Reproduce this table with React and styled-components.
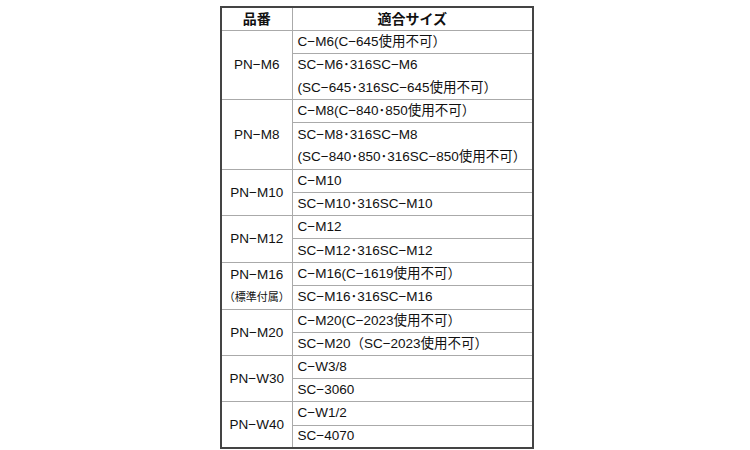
import React from 'react';
import styled, { createGlobalStyle } from 'styled-components';

const GlobalStyle = createGlobalStyle`
  html, body {
    margin: 0;
    padding: 0;
    background: #fff;
  }
  body {
    font-family: "Liberation Sans", "Noto Sans CJK JP", sans-serif;
    color: #111;
  }
`;

const Page = styled.div`
  width: 750px;
  height: 450px;
  padding: 6px 0 0 220px;
  box-sizing: border-box;
  overflow: hidden;
`;

const Table = styled.table`
  width: 314px;
  border-collapse: collapse;
  border: 2px solid #444;
  table-layout: fixed;
  font-size: 13.5px;
`;

const Row = styled.tr`
  height: ${(p) => (p.$double ? 46.4 : 23.2)}px;
`;

const HeadCell = styled.th`
  padding: 0;
  border: 1px solid #aaa;
  font-weight: bold;
  font-size: 14px;
  line-height: 18px;
  text-align: center;
  vertical-align: middle;
`;

const NameCell = styled.td`
  padding: 0;
  border: 1px solid #aaa;
  text-align: center;
  vertical-align: middle;
  font-size: 13.5px;
  line-height: 23px;
`;

const Note = styled.div`
  font-size: 11px;
  line-height: 23px;
`;

const FitCell = styled.td`
  padding: 0 0 0 5px;
  border: 1px solid #aaa;
  vertical-align: middle;
  line-height: ${(p) => (p.$double ? 22.5 : 18)}px;
  white-space: nowrap;
`;

const groups = [
  { name: 'PN−M6', fits: ['C−M6(C−645使用不可）', ['SC−M6･316SC−M6', '(SC−645･316SC−645使用不可）']] },
  { name: 'PN−M8', fits: ['C−M8(C−840･850使用不可）', ['SC−M8･316SC−M8', '(SC−840･850･316SC−850使用不可）']] },
  { name: 'PN−M10', fits: ['C−M10', 'SC−M10･316SC−M10'] },
  { name: 'PN−M12', fits: ['C−M12', 'SC−M12･316SC−M12'] },
  { name: 'PN−M16', note: '（標準付属）', fits: ['C−M16(C−1619使用不可）', 'SC−M16･316SC−M16'] },
  { name: 'PN−M20', fits: ['C−M20(C−2023使用不可）', 'SC−M20（SC−2023使用不可）'] },
  { name: 'PN−W30', fits: ['C−W3/8', 'SC−3060'] },
  { name: 'PN−W40', fits: ['C−W1/2', 'SC−4070'] },
];

const isDouble = (fit) => Array.isArray(fit);

const renderFit = (fit) =>
  isDouble(fit) ? fit.map((line, i) => <div key={i}>{line}</div>) : fit;

export default function App() {
  return (
    <Page>
      <GlobalStyle />
      <Table>
        <colgroup>
          <col style={{ width: '71px' }} />
          <col />
        </colgroup>
        <thead>
          <Row>
            <HeadCell>品番</HeadCell>
            <HeadCell>適合サイズ</HeadCell>
          </Row>
        </thead>
        <tbody>
          {groups.map((g) => (
            <React.Fragment key={g.name}>
              <Row $double={isDouble(g.fits[0])}>
                <NameCell rowSpan={2}>
                  {g.name}
                  {g.note && <Note>{g.note}</Note>}
                </NameCell>
                <FitCell $double={isDouble(g.fits[0])}>{renderFit(g.fits[0])}</FitCell>
              </Row>
              <Row $double={isDouble(g.fits[1])}>
                <FitCell $double={isDouble(g.fits[1])}>{renderFit(g.fits[1])}</FitCell>
              </Row>
            </React.Fragment>
          ))}
        </tbody>
      </Table>
    </Page>
  );
}
